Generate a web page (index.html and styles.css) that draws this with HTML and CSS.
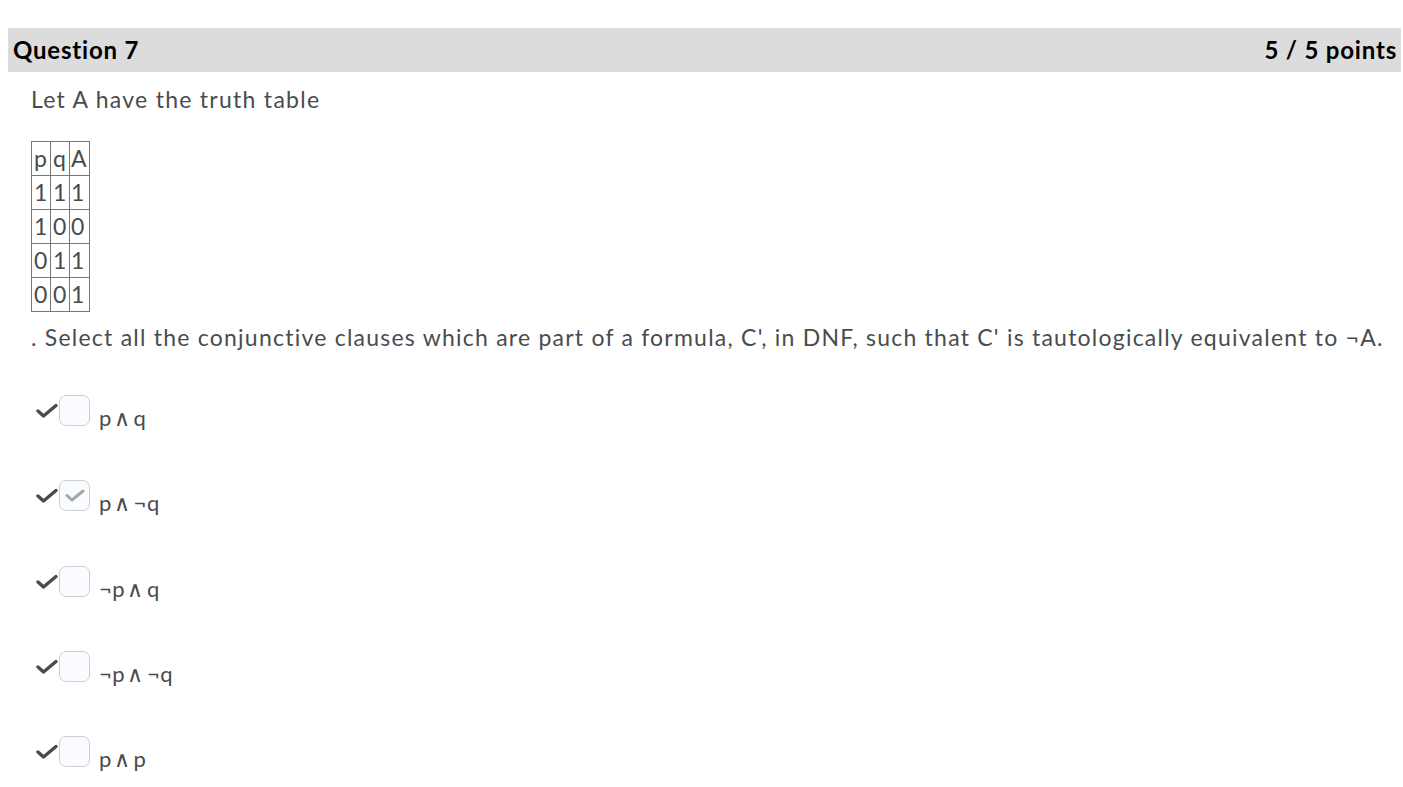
FILE: index.html
```html
<!DOCTYPE html>
<html>
<head>
<meta charset="utf-8">
<link rel="stylesheet" href="styles.css">
</head>
<body>
<div class="page">
  <div class="qhead">
    <h2 class="qtitle">Question 7</h2>
    <span class="qscore">5 / 5 points</span>
  </div>
  <div class="qbody">
    <p class="intro">Let A have the truth table</p>
    <table class="tt">
      <tr><td>p</td><td>q</td><td>A</td></tr>
      <tr><td>1</td><td>1</td><td>1</td></tr>
      <tr><td>1</td><td>0</td><td>0</td></tr>
      <tr><td>0</td><td>1</td><td>1</td></tr>
      <tr><td>0</td><td>0</td><td>1</td></tr>
    </table>
    <p class="prompt">. Select all the conjunctive clauses which are part of a formula, C', in DNF, such that C' is tautologically equivalent to ¬A.</p>
    <ul class="options">
      <li class="opt">
        <svg class="mark" viewBox="0 0 22 15"><path d="M2 8 L7.5 13 L20 2.5"/></svg>
        <span class="box"></span>
        <span class="label">p<span class="op">∧</span>q</span>
      </li>
      <li class="opt">
        <svg class="mark" viewBox="0 0 22 15"><path d="M2 8 L7.5 13 L20 2.5"/></svg>
        <span class="box checked"><svg viewBox="0 0 20 13"><path d="M2 6.5 L7 11 L18 2"/></svg></span>
        <span class="label">p<span class="op">∧</span>¬q</span>
      </li>
      <li class="opt">
        <svg class="mark" viewBox="0 0 22 15"><path d="M2 8 L7.5 13 L20 2.5"/></svg>
        <span class="box"></span>
        <span class="label">¬p<span class="op">∧</span>q</span>
      </li>
      <li class="opt">
        <svg class="mark" viewBox="0 0 22 15"><path d="M2 8 L7.5 13 L20 2.5"/></svg>
        <span class="box"></span>
        <span class="label">¬p<span class="op">∧</span>¬q</span>
      </li>
      <li class="opt">
        <svg class="mark" viewBox="0 0 22 15"><path d="M2 8 L7.5 13 L20 2.5"/></svg>
        <span class="box"></span>
        <span class="label">p<span class="op">∧</span>p</span>
      </li>
    </ul>
  </div>
</div>
</body>
</html>
```
FILE: styles.css
```css
html, body {
  margin: 0;
  padding: 0;
  background: #ffffff;
}
body {
  font-family: Lato, "Noto Sans", sans-serif;
  color: #494c4e;
}
.page {
  padding: 28px 2px 30px 8px;
}
.qhead {
  display: flex;
  justify-content: space-between;
  align-items: center;
  height: 44px;
  background: #dcdcdc;
  padding: 0 4px 0 5px;
}
.qtitle {
  margin: 0;
  font-size: 24px;
  font-weight: 700;
  color: #000000;
  line-height: 1;
  letter-spacing: 0.8px;
}
.qscore {
  font-size: 24px;
  font-weight: 700;
  color: #000000;
  line-height: 1;
  letter-spacing: 0.8px;
}
.qbody {
  padding-left: 23px;
}
.intro {
  margin: 13px 0 0 0;
  font-size: 23px;
  line-height: 28px;
  letter-spacing: 1.27px;
}
.tt {
  margin-top: 28px;
  border-collapse: collapse;
  font-size: 23px;
}
.tt td {
  border: 1px solid #777777;
  padding: 0 0 0 2px;
  width: 16px;
  height: 33px;
  line-height: 33px;
  text-align: left;
}
.tt td:nth-child(3) {
  width: 18px;
  padding-left: 1px;
}
.prompt {
  margin: 11px 0 0 0;
  font-size: 23px;
  line-height: 28px;
  letter-spacing: 1.23px;
}
.options {
  list-style: none;
  margin: 0;
  padding: 44px 0 0 0;
  display: flex;
  flex-direction: column;
  gap: 54.25px;
}
.opt {
  display: flex;
  align-items: center;
  height: 31px;
}
.mark {
  width: 22px;
  height: 15px;
  margin-left: 5px;
  fill: none;
  stroke: #494c4e;
  stroke-width: 3.4;
  stroke-linecap: round;
  stroke-linejoin: round;
}
.box {
  box-sizing: border-box;
  flex: none;
  width: 31px;
  height: 31px;
  margin-left: 1px;
  border: 1px solid #cdd0d3;
  border-radius: 7px;
  background: #f9fbff;
  display: flex;
  align-items: center;
  justify-content: center;
}
.box svg {
  width: 20px;
  height: 13px;
  fill: none;
  stroke: #a4a6a8;
  stroke-width: 3;
  stroke-linecap: round;
  stroke-linejoin: round;
}
.label {
  align-self: flex-start;
  margin-left: 9px;
  margin-top: 10px;
  font-size: 22px;
  line-height: 26px;
  letter-spacing: 0.6px;
}
.op {
  font-family: "DejaVu Sans", sans-serif;
  font-size: 22px;
  font-weight: 300;
  margin: 0 3px 0 2px;
}
```
